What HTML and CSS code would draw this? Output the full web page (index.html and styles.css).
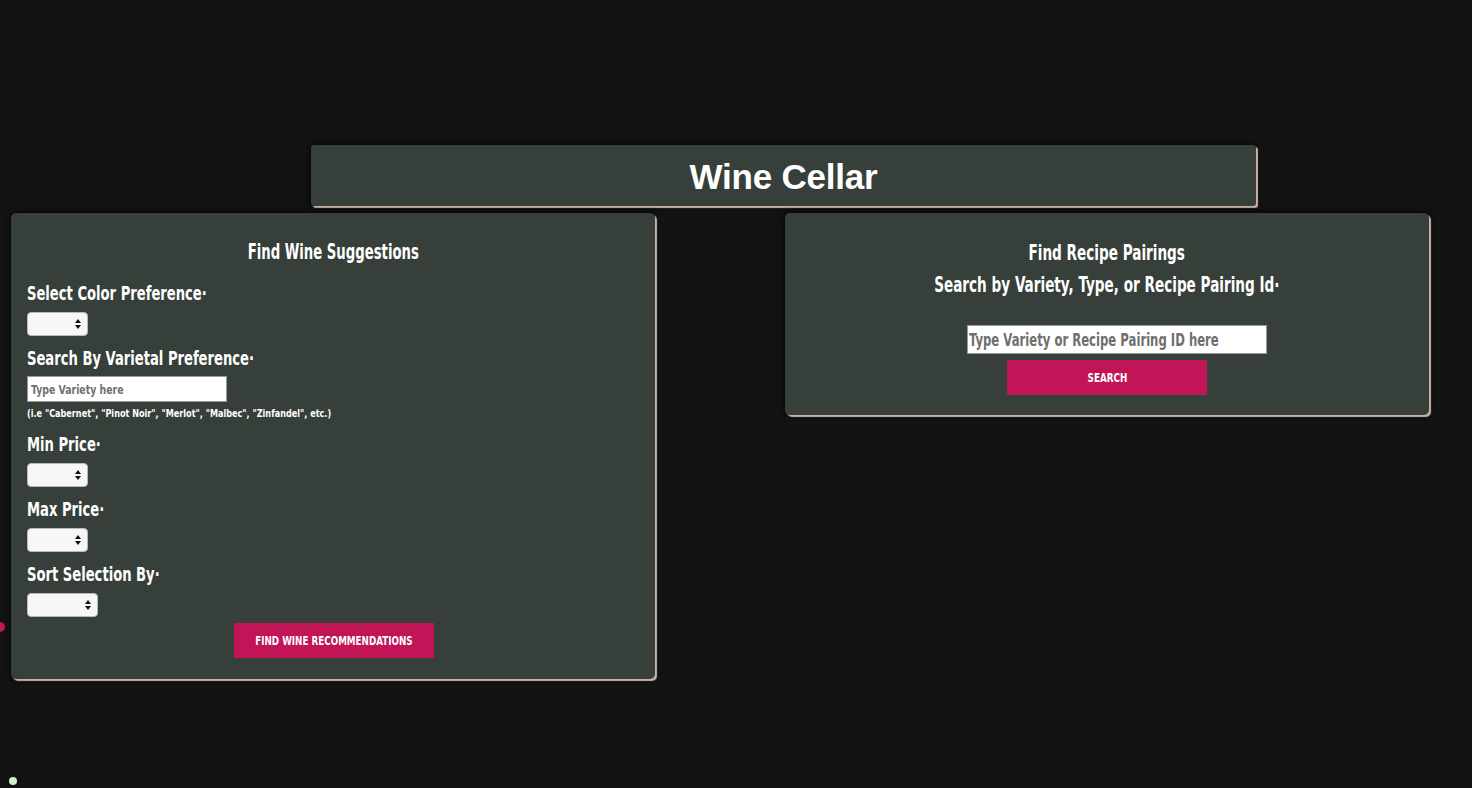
FILE: index.html
```html
<!DOCTYPE html>
<html>
<head>
<meta charset="utf-8">
<title>Wine Cellar</title>
<link rel="stylesheet" href="styles.css">
</head>
<body>
<span class="dot-pink"></span>
<span class="dot-green"></span>
<header class="title-wrap">
  <div class="title-box"><h1>Wine Cellar</h1></div>
</header>
<main class="panels">
  <section class="panel panel-left">
    <h2><span class="cx">Find Wine Suggestions</span></h2>
    <label class="lbl"><span class="lx">Select Color Preference·</span></label>
    <div class="select"></div>
    <label class="lbl"><span class="lx">Search By Varietal Preference·</span></label>
    <div class="text-input small"><span class="lx">Type Variety here</span></div>
    <p class="note"><span class="lx">(i.e "Cabernet", "Pinot Noir", "Merlot", "Malbec", "Zinfandel", etc.)</span></p>
    <label class="lbl"><span class="lx">Min Price·</span></label>
    <div class="select"></div>
    <label class="lbl"><span class="lx">Max Price·</span></label>
    <div class="select"></div>
    <label class="lbl"><span class="lx">Sort Selection By·</span></label>
    <div class="select wide"></div>
    <div class="btn-row"><button class="btn"><span class="cx">FIND WINE RECOMMENDATIONS</span></button></div>
  </section>
  <section class="panel panel-right">
    <h2><span class="cx">Find Recipe Pairings</span></h2>
    <h2 class="sub"><span class="cx">Search by Variety, Type, or Recipe Pairing Id·</span></h2>
    <div class="text-input big"><span class="lx">Type Variety or Recipe Pairing ID here</span></div>
    <button class="btn"><span class="cx">SEARCH</span></button>
  </section>
</main>
</body>
</html>
```
FILE: styles.css
```css
html, body {
  margin: 0;
  padding: 0;
}
body {
  background: #131313;
  width: 1472px;
  height: 788px;
  overflow: hidden;
  position: relative;
  font-family: "DejaVu Sans Condensed", "DejaVu Sans", sans-serif;
  font-stretch: condensed;
  font-weight: 700;
  color: #ffffff;
}
/* condensed display text (stand-in for a narrow display face) */
.cx,
.lx {
  display: inline-block;
  white-space: nowrap;
  transform: scaleX(0.72);
}
.cx {
  transform-origin: center;
}
.lx {
  transform-origin: left center;
}
.dot-pink {
  position: absolute;
  left: -5px;
  top: 622px;
  width: 10px;
  height: 10px;
  border-radius: 50%;
  background: #c2185b;
}
.dot-green {
  position: absolute;
  left: 9px;
  top: 777px;
  width: 8px;
  height: 8px;
  border-radius: 50%;
  background: #d6ecd2;
}
.title-wrap {
  padding: 145px 0 0 311px;
}
.title-box {
  width: 945px;
  height: 61px;
  padding-top: 3px;
  box-sizing: border-box;
  background: #373f3a;
  border-radius: 3px;
  box-shadow: 2px 2px 1px #c9b1a7, 0 0 6px #000;
  display: flex;
  align-items: center;
  justify-content: center;
}
.title-box h1 {
  margin: 0;
  font-family: "Liberation Sans", Arial, sans-serif;
  font-stretch: normal;
  font-weight: 700;
  font-size: 35px;
  letter-spacing: -0.2px;
  color: #fff;
}
.panels {
  display: flex;
  align-items: flex-start;
  gap: 130px;
  padding: 7px 0 0 11px;
}
.panel {
  width: 644px;
  background: #373f3a;
  border-radius: 5px;
  box-shadow: 2px 2px 1px #c9b1a7, 0 0 6px #000;
  box-sizing: border-box;
}
.panel-left {
  height: 466px;
  padding: 27px 16px 0 16px;
  display: flex;
  flex-direction: column;
  align-items: flex-start;
}
.panel-right {
  height: 202px;
  padding: 28px 0 0;
  display: flex;
  flex-direction: column;
  align-items: center;
}
h2 {
  margin: 0;
  font-size: 21px;
  line-height: 24px;
  font-weight: 700;
  align-self: center;
  text-align: center;
  white-space: nowrap;
}
.panel-left h2 .cx {
  transform: scaleX(0.7);
}
.panel-right h2.sub {
  margin-top: 8px;
}
.lbl {
  display: block;
  font-size: 20px;
  line-height: 24px;
  margin-top: 17px;
}
.lbl .lx {
  transform: scaleX(0.73);
}
.select {
  width: 59px;
  height: 22px;
  background: #f7f7f7;
  border: 1px solid #b9b9b9;
  border-radius: 4px;
  position: relative;
}
.select.wide {
  width: 69px;
}
.select::before,
.select::after {
  content: "";
  position: absolute;
  right: 6px;
  width: 0;
  height: 0;
  border-left: 3px solid transparent;
  border-right: 3px solid transparent;
}
.select::before {
  top: 6px;
  border-bottom: 4px solid #111;
}
.select::after {
  top: 12px;
  border-top: 4px solid #111;
}
.lbl + .select {
  margin-top: 7px;
}
.select + .lbl {
  margin-top: 10px;
}
.text-input {
  background: #fff;
  border: 1px solid #999;
  box-sizing: border-box;
  display: flex;
  align-items: center;
  color: #6f6f6f;
  padding-left: 3px;
  overflow: hidden;
}
.text-input .lx {
  transform: scaleX(0.8);
}
.text-input.small {
  width: 200px;
  height: 26px;
  margin-top: 6px;
  font-size: 13px;
}
.text-input.big {
  width: 300px;
  height: 29px;
  margin: 28px 0 0 20px;
  font-size: 18px;
  padding-left: 1px;
}
.text-input.big .lx {
  transform: scaleX(0.72);
}
.note {
  margin: 5px 0 0;
  font-size: 11px;
  line-height: 14px;
}
.note .lx {
  transform: scaleX(0.82);
}
.note + .lbl {
  margin-top: 11px;
}
.btn-row {
  align-self: stretch;
  display: flex;
  justify-content: center;
  margin-top: 6px;
  padding-left: 2px;
}
.btn {
  width: 200px;
  height: 35px;
  background: #c21557;
  color: #fff;
  border: 0;
  font-family: inherit;
  font-weight: 700;
  font-size: 13px;
  padding: 0;
  display: flex;
  align-items: center;
  justify-content: center;
}
.btn .cx {
  transform: scaleX(0.75);
}
.panel-right .btn {
  margin-top: 6px;
}
```
